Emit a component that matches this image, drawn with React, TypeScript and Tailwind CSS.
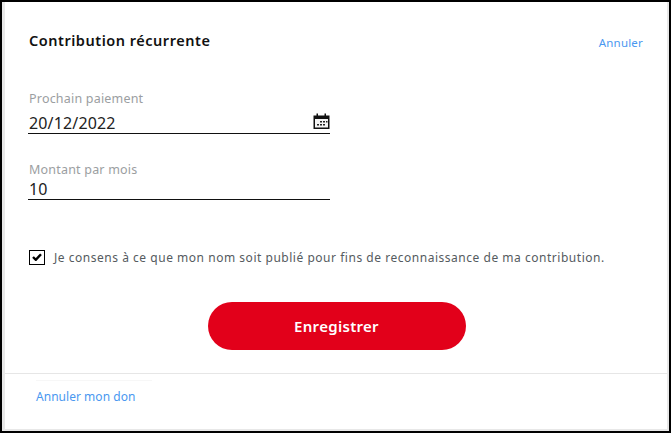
import * as React from 'react'

const font = {fontFamily: '"Noto Sans", sans-serif'}

function CalendarIcon() {
  return (
    <svg width="17" height="16" viewBox="0 0 17 16" className="flex-none">
      <path d="M0.5 2.5h3V0.500h1.500v2h6.500v-2H13v2h3.500V16H0.500z" fill="#111" />
      <rect x="2" y="6" width="13" height="8.500" fill="#f4f4f4" />
      <rect x="7" y="8" width="2" height="1.500" fill="#222" />
      <rect x="10" y="8" width="2" height="1.500" fill="#222" />
      <rect x="13" y="8" width="1.500" height="1.500" fill="#222" />
      <rect x="4" y="11" width="2" height="1.500" fill="#222" />
      <rect x="7" y="11" width="2" height="1.500" fill="#222" />
      <rect x="10" y="11" width="2" height="1.500" fill="#222" />
    </svg>
  )
}

function Field({
  label,
  value,
  className,
  valueClassName,
  children,
}: {
  label: string
  value: string
  className?: string
  valueClassName: string
  children?: React.ReactNode
}) {
  return (
    <div className={`w-[302px] ml-[23px] ${className ?? ''}`}>
      <div className="pl-px text-[12.5px] leading-[18px] tracking-[0.2px] text-[#9b9ea1]">
        {label}
      </div>
      <div
        className={`flex items-end justify-between border-b border-[#111] pl-px text-[16px] leading-5 tracking-[0.15px] text-[#222] ${valueClassName}`}
      >
        <span>{value}</span>
        {children}
      </div>
    </div>
  )
}

export default function App() {
  return (
    <div
      className="w-[671px] h-[433px] flex flex-col bg-white border-2 border-black overflow-hidden"
      style={font}
    >
      <div className="flex flex-col flex-1 border-l-[3px] border-r-2 border-b-2 border-[#e8e8e8]">
        <div className="flex items-start justify-between pl-[24px] pr-[24px] pt-[28px] h-[88px]">
          <h1 className="text-[14.500px] leading-5 font-semibold tracking-[0.52px] text-[#111]">
            Contribution récurrente
          </h1>
          <a className="mt-[5px] text-[11.500px] leading-4 tracking-[0.2px] text-[#4a98f0]">Annuler</a>
        </div>

        <Field label="Prochain paiement" value="20/12/2022" valueClassName="pt-[5px] h-[26px]">
          <div className="mb-[4px]">
            <CalendarIcon />
          </div>
        </Field>
        <Field label="Montant par mois" value="10" className="mt-[27px]" valueClassName="pt-px h-[21px]" />

        <div className="flex items-center ml-[24px] mt-[49px] h-4">
          <div className="w-4 h-[15px] flex items-center justify-center border border-black flex-none">
            <svg width="10" height="8" viewBox="0 0 10 8">
              <path d="M1 4l2.800 2.800L9 1.200" fill="none" stroke="#000" strokeWidth="2.400" />
            </svg>
          </div>
          <span className="ml-[9px] mt-px text-[12px] leading-4 tracking-[0.525px] text-[#555b60] whitespace-nowrap">
            Je consens à ce que mon nom soit publié pour fins de reconnaissance de ma contribution.
          </span>
        </div>

        <div className="flex justify-center mt-[37px] pl-px">
          <button className="w-[258px] h-[48px] rounded-full bg-[#e2001a] text-white text-[15px] font-semibold tracking-[0.3px]">
            Enregistrer
          </button>
        </div>

        <div className="mt-[23px] border-t border-[#e6e6e6] pl-[31px]">
          <div className="mt-[6px] w-[116px] border-t border-[#f7f7f7]" />
          <a className="block mt-[8px] text-[12px] leading-4 tracking-[0.03px] text-[#4a98f0]">Annuler mon don</a>
        </div>
      </div>
    </div>
  )
}
